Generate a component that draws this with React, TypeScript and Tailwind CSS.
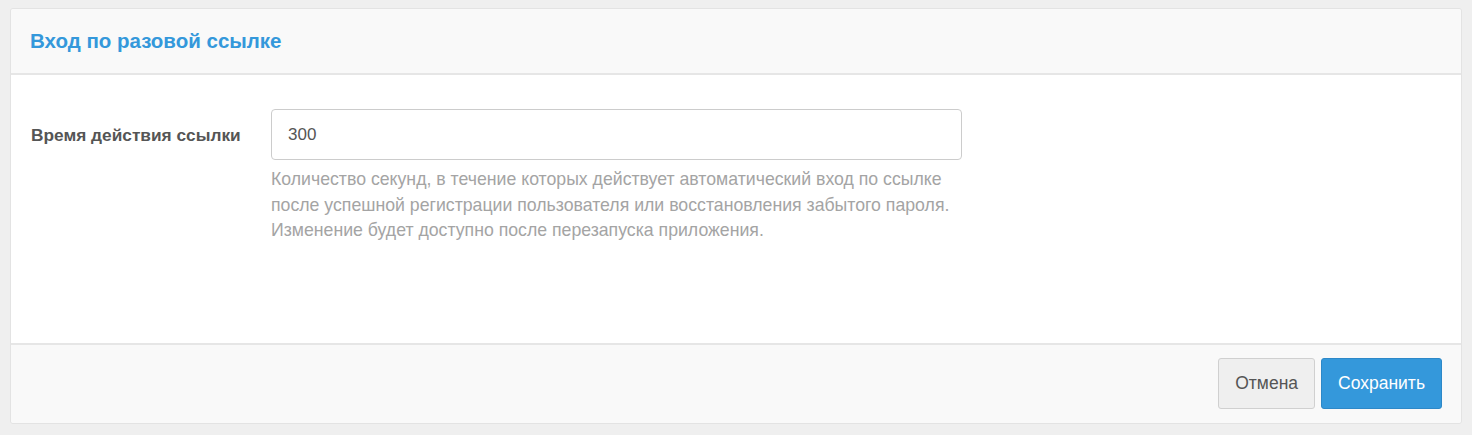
export default function App() {
  return (
    <div className="h-[435px] bg-[#efefef] px-[10px] pt-2 font-['Liberation_Sans',Arial,sans-serif]">
      <div className="overflow-hidden rounded-[3px] border border-[#e3e3e3]">
        <div className="flex h-[66px] items-center border-b-2 border-[#e6e6e6] bg-[#f9f9f9] px-[19px]">
          <h1 className="text-[20.5px] font-bold text-[#3498db]">Вход по разовой ссылке</h1>
        </div>
        <div className="flex h-[268px] bg-white px-5 pt-[34px]">
          <label className="w-[240px] pt-[14px] text-[17.3px] leading-[24px] font-bold text-[#555]">
            Время действия ссылки
          </label>
          <div className="w-[691px]">
            <input
              defaultValue="300"
              className="h-[51px] w-full rounded border border-[#cccccc] px-4 text-[17px] text-[#555] outline-none"
            />
            <p className="mt-[7px] text-[17.7px] leading-[25.5px] text-[#a4a4a4]">
              Количество секунд, в течение которых действует автоматический вход по ссылке
              <br />
              после успешной регистрации пользователя или восстановления забытого пароля.
              <br />
              Изменение будет доступно после перезапуска приложения.
            </p>
          </div>
        </div>
        <div className="flex h-[80px] items-start justify-end gap-[6px] border-t-2 border-[#e6e6e6] bg-[#f9f9f9] pt-[13px] pr-[19px]">
          <button className="h-[51px] rounded-[3px] border border-[#d0d0d0] bg-[#efefef] px-4 text-[17.5px] text-[#555]">
            Отмена
          </button>
          <button className="h-[51px] rounded-[3px] border border-[#2d88c8] bg-[#3498db] px-4 text-[17.5px] text-white">
            Сохранить
          </button>
        </div>
      </div>
    </div>
  );
}
